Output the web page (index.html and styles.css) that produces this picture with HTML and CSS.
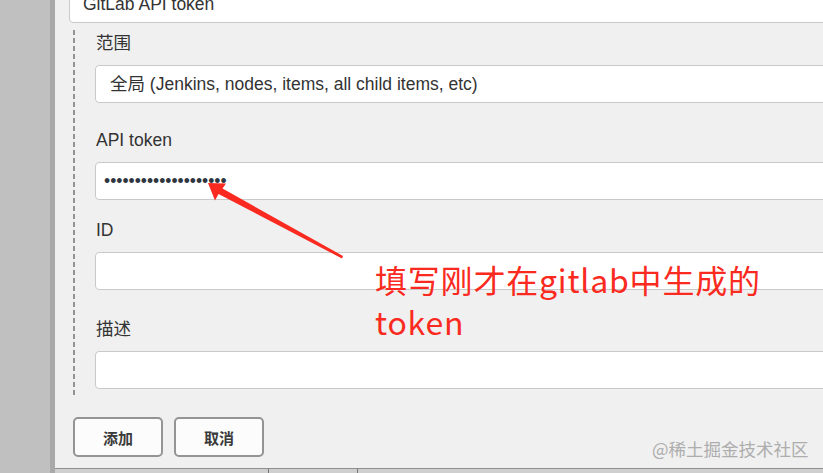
FILE: index.html
```html
<!DOCTYPE html>
<html lang="zh">
<head>
<meta charset="utf-8">
<title>Jenkins credentials</title>
<link rel="stylesheet" href="styles.css">
</head>
<body>
<div class="page">
  <div class="backdrop"></div>
  <div class="main">
    <div class="dialog">
      <div class="input input-top">GitLab API token</div>
      <div class="section">
        <div class="field">
          <div class="label">范围</div>
          <div class="input input-select">全局 (Jenkins, nodes, items, all child items, etc)</div>
        </div>
        <div class="field field-token">
          <div class="label">API token</div>
          <div class="input input-password">••••••••••••••••••••</div>
        </div>
        <div class="field field-id">
          <div class="label">ID</div>
          <div class="input"></div>
        </div>
        <div class="field field-desc">
          <div class="label">描述</div>
          <div class="input"></div>
        </div>
      </div>
      <div class="actions">
        <button class="btn">添加</button>
        <button class="btn">取消</button>
      </div>
    </div>
    <div class="underlay">
      <div class="cell cell-a"></div>
      <div class="cell cell-b"></div>
      <div class="cell cell-c"></div>
    </div>
  </div>
</div>
<svg class="arrow" width="823" height="473" viewBox="0 0 823 473">
  <polygon points="208,183 226,183.5 222.5,188.5 343,256 342,258.5 218.5,194 215,200.5" fill="#fa2a20"/>
</svg>
<div class="note">填写刚才在gitlab中生成的<br>token</div>
<div class="watermark">@稀土掘金技术社区</div>
</body>
</html>
```
FILE: styles.css
```css
html, body {
  margin: 0;
  padding: 0;
  width: 823px;
  height: 473px;
  overflow: hidden;
  background: #c0c0c0;
}
body {
  position: relative;
  font-family: "Liberation Sans", Arial, "Noto Sans CJK SC", sans-serif;
  color: #333;
}
.page {
  display: flex;
  height: 473px;
}
.backdrop {
  width: 50px;
  flex: none;
  background: #c0c0c0;
}
.main {
  flex: 1;
  display: flex;
  flex-direction: column;
  border-left: 5px solid #a9a9a9;
  overflow: hidden;
}
.dialog {
  background: #f0f0f0;
  padding: 0 0 11px 0;
  border-bottom: 1px solid #8f8f8f;
}
.input {
  box-sizing: border-box;
  height: 38px;
  background: #fff;
  border: 1px solid #c9c9c9;
  border-radius: 4px;
  margin-right: -20px;
  font-size: 17.5px;
  line-height: 36px;
  white-space: nowrap;
  color: #333;
}
.input-top {
  margin-top: -15px;
  margin-left: 14px;
  padding-left: 13px;
}
.input-select {
  padding-left: 14px;
}
.input-password {
  padding-left: 8px;
  color: #2e3640;
}
.section {
  margin: 7px 0 0 18px;
  padding: 1px 0 7px 22px;
  background-image: repeating-linear-gradient(to bottom, #939393 0 5px, transparent 5px 8px);
  background-size: 2px 100%;
  background-repeat: no-repeat;
  background-position: 0 0;
}
.label {
  font-size: 17.5px;
  line-height: 24px;
  height: 24px;
  margin: 0 0 10px 1px;
  color: #333;
}
.field-token { margin-top: 25px; }
.field-id { margin-top: 18px; }
.field-desc { margin-top: 27px; }
.actions {
  display: flex;
  gap: 11px;
  margin: 21px 0 0 18px;
}
.btn {
  box-sizing: border-box;
  width: 90px;
  height: 40px;
  background: #fcfcfc;
  border: 2px solid #949494;
  border-radius: 5px;
  font-family: "Liberation Sans", "Noto Sans CJK SC", sans-serif;
  font-weight: bold;
  font-size: 15px;
  color: #3a3a3a;
  padding: 0;
}
.underlay {
  flex: 1;
  display: flex;
  background: #cfcfcf;
}
.cell-a { width: 213px; }
.cell-b {
  width: 88px;
  border-left: 1px solid #777;
  border-right: 1px solid #777;
}
.cell-c { flex: 1; }
.arrow {
  position: absolute;
  left: 0;
  top: 0;
}
.note {
  position: absolute;
  left: 375px;
  top: 258px;
  font-family: "Noto Sans CJK SC", sans-serif;
  font-size: 32px;
  line-height: 42px;
  letter-spacing: 0.8px;
  color: #fa2a20;
  white-space: nowrap;
}
.watermark {
  position: absolute;
  left: 652px;
  top: 437px;
  font-family: "Noto Sans CJK SC", sans-serif;
  font-size: 17.5px;
  line-height: 24px;
  color: #adadad;
}
```
